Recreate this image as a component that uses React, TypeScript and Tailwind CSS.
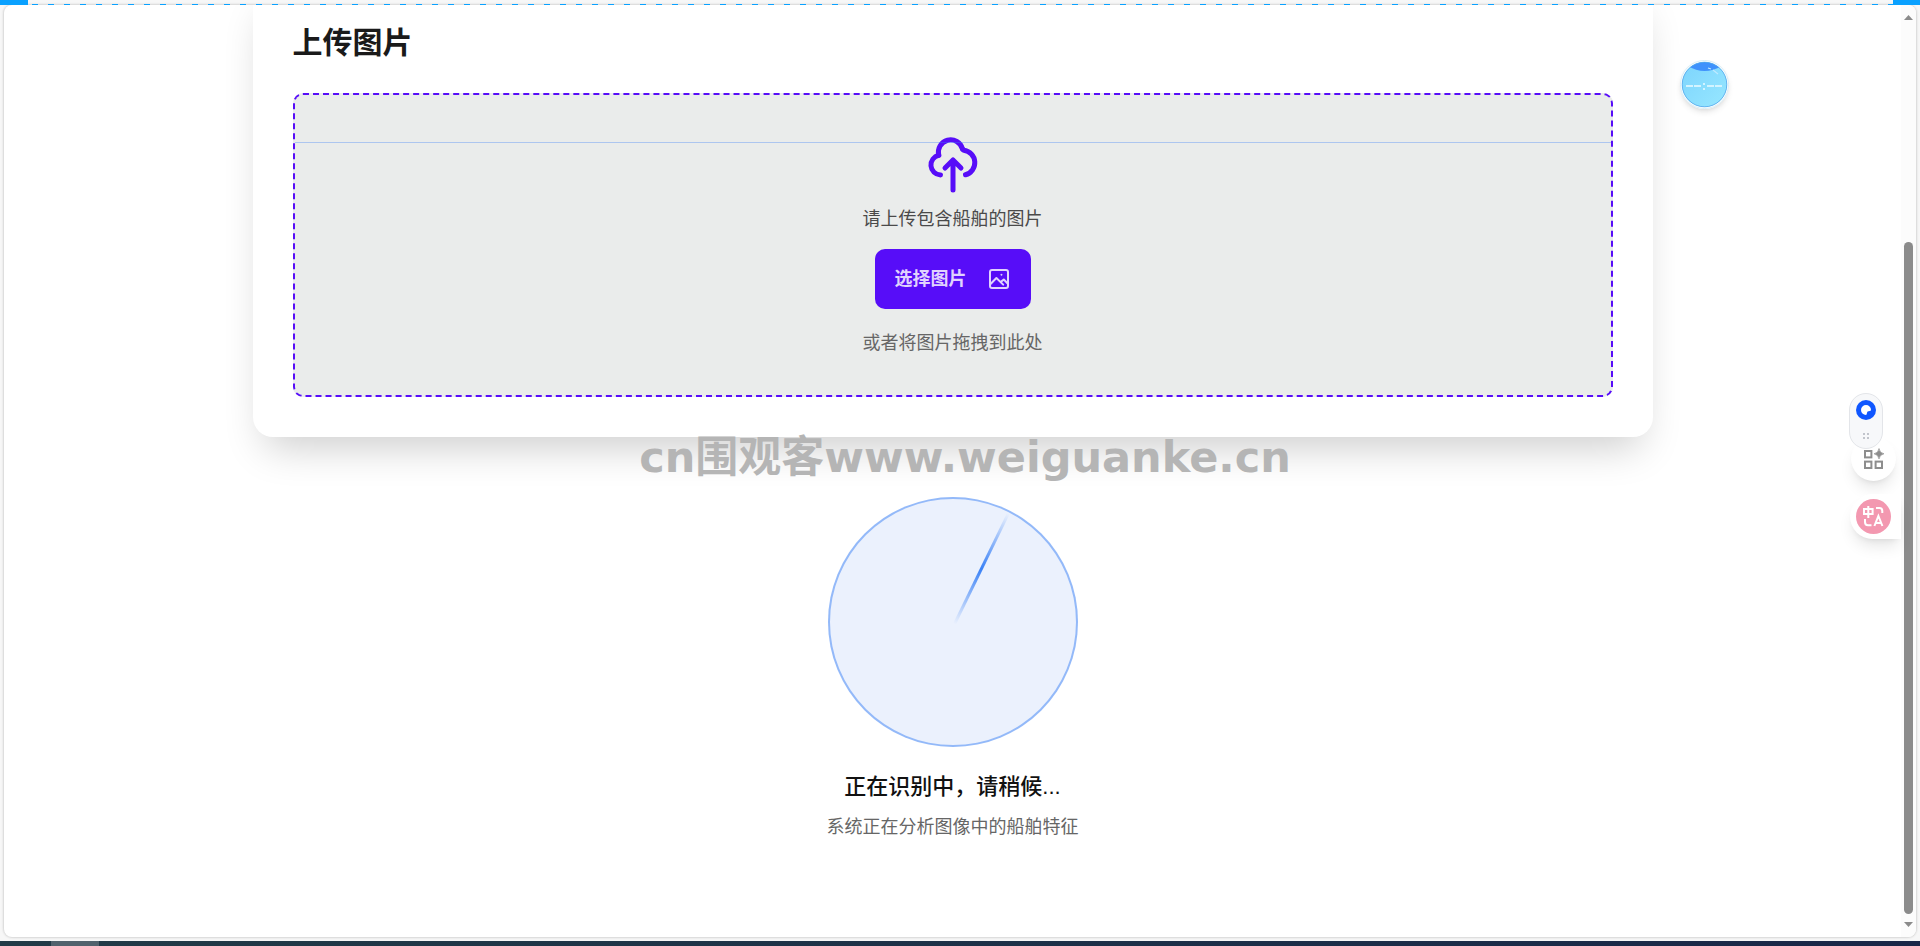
import {useState} from "react";

function CloudUploadIcon() {
    return (
        <svg viewBox="0 0 24 24" className="size-[60px] text-[#570df8]" fill="none" stroke="currentColor"
             strokeWidth="2" strokeLinecap="round" strokeLinejoin="round">
            <path d="M7 16A4 4 0 0 1 6.3 8.1A4.9 4.9 0 0 1 15.8 5.6"/>
            <path d="M6.3 8.1C6.2 7.7 6.2 7.3 6.2 6.9"/>
            <path d="M15.8 5.6L16.3 6.1A5 5 0 0 1 17 15.9"/>
            <path d="M12 22V10M8.8 13.2L12 10L15.2 13.2"/>
        </svg>
    )
}

function ImageIcon() {
    return (
        <svg viewBox="0 0 24 24" className="size-6" fill="none" stroke="currentColor" strokeWidth="2"
             strokeLinecap="round" strokeLinejoin="round">
            <rect x="3" y="3" width="18" height="18" rx="2"/>
            <path d="M3.8 16.8L9.4 11L16.2 17.6"/>
            <path d="M13.8 14.9L16.8 12.5L20.4 16.2"/>
            <circle cx="14.3" cy="7.8" r="0.5" fill="currentColor" strokeWidth="1"/>
        </svg>
    )
}

function UploadCard() {
    const [dragging, setDragging] = useState(false)

    return (
        <section className="relative -mt-[22px] w-full max-w-[1400px] rounded-[20px] bg-white p-10 shadow-[0_22px_40px_-12px_rgba(0,0,0,0.2)]">
            <h1 className="mb-[30px] text-[30px] leading-10 font-bold text-[#1a1a1a]">上传图片</h1>
            <div
                onDragOver={(e) => {
                    e.preventDefault()
                    setDragging(true)
                }}
                onDragLeave={() => setDragging(false)}
                className={`relative flex flex-col items-center rounded-[10px] border-2 border-dashed border-[#570df8] pt-10 pb-[38px] ${dragging ? 'bg-[#e0e0f5]' : 'bg-[#eaeceb]'}`}
            >
                <CloudUploadIcon/>
                <div className="absolute inset-x-0 top-[47px] h-px bg-[#3b82f6]/35"/>
                <p className="mt-2.5 mb-4 text-lg leading-7 text-[#4a4a4a]">请上传包含船舶的图片</p>
                <button
                    type="button"
                    className="flex h-[60px] cursor-pointer items-center gap-5 rounded-[10px] bg-[#570df8] px-5 text-lg font-bold text-[#e0d2fe]"
                >
                    选择图片
                    <ImageIcon/>
                </button>
                <p className="mt-5 text-lg leading-7 text-[#666666]">或者将图片拖拽到此处</p>
            </div>
        </section>
    )
}

function Scanner() {
    return (
        <section className="mt-[60px] flex flex-col items-center">
            <div className="relative size-[250px] rounded-full border-2 border-[#3b82f6]/50 bg-[#ebf1fd]">
                <div
                    className="absolute top-0.5 left-1/2 h-1/2 w-[3px] origin-bottom rotate-[26deg] bg-linear-to-t from-transparent via-[#3b82f6] to-transparent"/>
            </div>
            <h2 className="mt-5 text-[22px] leading-10 font-medium text-[#111111]">正在识别中，请稍候...</h2>
            <p className="mt-1.5 text-lg leading-7 text-[#666666]">系统正在分析图像中的船舶特征</p>
        </section>
    )
}

function BallWidget() {
    return (
        <button type="button" aria-label="助手"
                className="absolute top-[60px] right-[191px] size-[49px] rounded-full bg-white shadow-md">
            <svg viewBox="0 0 49 49" className="size-full">
                <defs>
                    <linearGradient id="water" x1="0" y1="0" x2="1" y2="1">
                        <stop offset="0" stopColor="#7bd3fd"/>
                        <stop offset="1" stopColor="#98e8ff"/>
                    </linearGradient>
                    <clipPath id="ball">
                        <circle cx="24.5" cy="24.5" r="22.5"/>
                    </clipPath>
                </defs>
                <circle cx="24.5" cy="24.5" r="24" fill="none" stroke="#d9edf5"/>
                <g clipPath="url(#ball)">
                    <rect width="49" height="49" fill="url(#water)"/>
                    <path d="M8 6Q24 16 42 6V0H8Z" fill="#3f91fc"/>
                    <path d="M28 8L31 9M33 10L38 14" stroke="#bfe9ff" strokeWidth="1.2"/>
                </g>
                <circle cx="24.5" cy="24.5" r="22.3" fill="none" stroke="#4fa6ec" strokeWidth="0.8"/>
                <path d="M6 26H13M14 26H21M27 26H34M35 26H42" stroke="#d3f4ff" strokeWidth="2"/>
                <path d="M24 23V25M24 28V30" stroke="#d3f4ff" strokeWidth="2"/>
            </svg>
        </button>
    )
}

function SideTools() {
    return (
        <div className="absolute top-[393px] right-[19px] w-[52px]">
            <button type="button" aria-label="更多工具"
                    className="absolute top-[43px] left-[2px] flex size-[45px] items-center justify-center rounded-full bg-white shadow-lg">
                <svg viewBox="0 0 22 22" className="size-[22px]" fill="none" stroke="#8d8d8d" strokeWidth="2">
                    <rect x="2" y="3" width="6.4" height="6.4"/>
                    <rect x="2" y="13.6" width="6.4" height="6.4"/>
                    <rect x="12.6" y="13.6" width="6.4" height="6.4"/>
                    <path d="M16 0.5Q16.6 5 21 5.8Q16.6 6.6 16 11Q15.4 6.6 11 5.8Q15.4 5 16 0.5Z" fill="#8d8d8d"
                          stroke="#8d8d8d" strokeWidth="0.6"/>
                </svg>
            </button>
            <div
                className="relative flex h-[56px] w-[34px] flex-col items-center rounded-full border border-[#e3e5e9] bg-[#f7f8fa] pt-[6px]">
                <button type="button" aria-label="主题">
                    <svg viewBox="0 0 20 20" className="size-5">
                        <circle cx="10" cy="10" r="10" fill="#0f56ff"/>
                        <path d="M10 5A5 5 0 1 0 10 15C11.2 15 10.6 12.6 11.6 11.6C12.6 10.8 15 11.4 15 10A5 5 0 0 0 10 5Z"
                              fill="#fff"/>
                    </svg>
                </button>
                <svg viewBox="0 0 6 6" className="mt-[13px] size-[6px]" fill="#c2c5cc">
                    <path d="M0 0h2v2h-2zM4 0h2v2h-2zM0 4h2v2h-2zM4 4h2v2h-2z"/>
                </svg>
            </div>
            <button type="button" aria-label="翻译"
                    className="absolute top-[101px] left-px flex h-[45px] w-[51px] items-center rounded-l-full bg-white pl-[6px] shadow-lg">
                <svg viewBox="0 0 35 35" className="size-[35px]" fill="none" stroke="#fff" strokeWidth="2">
                    <circle cx="17.5" cy="17.5" r="17.5" fill="#f398b0" stroke="none"/>
                    <path d="M12.3 7V19M8 10H16.6V15H8Z"/>
                    <path d="M20 9H23.5Q26.3 9 26.3 12V14"/>
                    <path d="M9 20V23Q9 26.2 12 26.2H15.5"/>
                    <path d="M18.4 27L22.4 17L26.4 27M19.8 24H25"/>
                </svg>
            </button>
        </div>
    )
}

function ScrollRail() {
    return (
        <div className="flex w-[15px] shrink-0 flex-col items-center bg-[#fcfcfc] pt-[10px] pb-[10px]">
            <svg viewBox="0 0 9 5" className="h-[5px] w-[9px]" fill="#8b8b8b">
                <path d="M0 5L4.5 0L9 5Z"/>
            </svg>
            <div className="flex w-[9px] flex-1 flex-col pt-[222px] pb-2">
                <div className="flex-1 rounded-full bg-[#8b8b8b]"/>
            </div>
            <svg viewBox="0 0 9 5" className="h-[5px] w-[9px]" fill="#8b8b8b">
                <path d="M0 0L4.5 5L9 0Z"/>
            </svg>
        </div>
    )
}

export default function App() {
    return (
        <div className="relative flex h-screen flex-col overflow-hidden bg-[#f7f7f7] font-['Liberation_Sans','Noto_Sans_CJK_SC',sans-serif]">
            <div className="mx-1 mt-[5px] mb-1 flex min-h-0 flex-1 overflow-hidden rounded-lg bg-white shadow-[0_0_2px_1px_#d6d6d6]">
                <main className="flex min-w-0 flex-1 flex-col items-center overflow-hidden">
                    <UploadCard/>
                    <Scanner/>
                </main>
                <ScrollRail/>
            </div>
            <footer className="flex h-[5px] shrink-0 bg-linear-to-r from-[#223b47] to-[#1a2748] pl-[51px]">
                <div className="w-12 bg-[#51626d]"/>
            </footer>

            {/* selection frame along the top edge */}
            <div className="absolute inset-x-0 top-0 flex h-[5px] items-end justify-between">
                <div className="h-[5px] w-7 bg-[#0aa1ff]"/>
                <div className="ml-1 h-px flex-1 bg-[repeating-linear-gradient(90deg,#0aa1ff_0_6px,transparent_6px_16px)]"/>
                <div className="h-[5px] w-[27px] bg-[#0aa1ff]"/>
            </div>

            <p className="pointer-events-none absolute inset-x-0 top-[427px] pl-2.5 text-center text-[43px] leading-[60px] font-bold whitespace-nowrap text-[#b5b5b5] font-['DejaVu_Sans','Noto_Sans_CJK_SC',sans-serif]">
                cn围观客www.weiguanke.cn
            </p>
            <BallWidget/>
            <SideTools/>
        </div>
    )
}
